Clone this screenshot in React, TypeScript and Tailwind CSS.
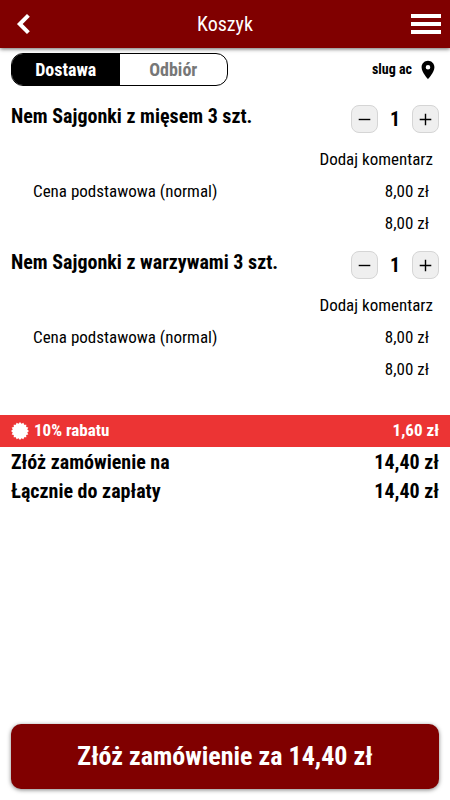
import { MdLocationOn } from "react-icons/md"

const items = [
  { id: 1, name: "Nem Sajgonki z mięsem 3 szt.", quantity: 1, price: "8,00 zł" },
  { id: 2, name: "Nem Sajgonki z warzywami 3 szt.", quantity: 1, price: "8,00 zł" },
]

const summary = [
  { label: "Złóż zamówienie na", value: "14,40 zł" },
  { label: "Łącznie do zapłaty", value: "14,40 zł" },
]

function Header() {
  return (
    <header className="grid h-12 shrink-0 grid-cols-3 items-center bg-[#800000] text-white shadow-[0_1px_4px_rgba(0,0,0,0.6)]">
      <button type="button" aria-label="Wstecz" className="ml-4 cursor-pointer justify-self-start">
        <svg viewBox="0 0 14 20" className="h-5 w-[14px]" fill="none" stroke="currentColor" strokeWidth="4">
          <path d="M12.4 1.4 3.8 10l8.6 8.6" />
        </svg>
      </button>
      <h1 className="text-center text-[20px]">Koszyk</h1>
      <button type="button" aria-label="Menu" className="mr-[9px] cursor-pointer justify-self-end">
        <svg viewBox="0 0 30 20" className="h-5 w-[30px]" fill="currentColor">
          <path d="M0 0h30v4H0zM0 8h30v4H0zM0 16h30v4H0z" />
        </svg>
      </button>
    </header>
  )
}

function StepButton({ label, path }: { label: string; path: string }) {
  return (
    <button
      type="button"
      aria-label={label}
      className="flex h-7 w-[27px] cursor-pointer items-center justify-center rounded-lg border border-[#d5d5d5] bg-[#efefef]"
    >
      <svg viewBox="0 0 13 13" className="size-[13px]" fill="none" stroke="currentColor" strokeWidth="1.4">
        <path d={path} />
      </svg>
    </button>
  )
}

function CartItem({ name, quantity, price }: { name: string; quantity: number; price: string }) {
  return (
    <li className="h-[146px]">
      <div className="flex items-start justify-between">
        <h2 className="text-[20px] leading-[22px] font-bold">{name}</h2>
        <div className="flex h-7 items-center">
          <StepButton label="Mniej" path="M.7 6.5h11.6" />
          <span className="w-[34px] text-center text-[20px] font-bold">{quantity}</span>
          <StepButton label="Więcej" path="M.7 6.5h11.6M6.5.7v11.6" />
        </div>
      </div>
      <div className="mt-[10px] flex flex-col text-[17px] leading-8">
        <button type="button" className="mr-[6px] cursor-pointer self-end">
          Dodaj komentarz
        </button>
        <p className="mr-[10px] ml-[22px] flex justify-between">
          <span>Cena podstawowa (normal)</span>
          <span>{price}</span>
        </p>
        <p className="mr-[10px] text-right">{price}</p>
      </div>
    </li>
  )
}

function DiscountIcon() {
  const points = Array.from({ length: 32 }, (_, i) => {
    const angle = (i * Math.PI) / 16
    const radius = i % 2 ? 7.4 : 9
    return `${9 + radius * Math.sin(angle)},${9 - radius * Math.cos(angle)}`
  }).join(" ")

  return (
    <svg viewBox="0 0 18 18" className="size-[18px]" fill="currentColor" aria-hidden="true">
      <polygon points={points} />
    </svg>
  )
}

export default function App() {
  return (
    <div className="flex min-h-screen flex-col bg-white font-['Roboto_Condensed',Roboto,sans-serif] text-black">
      <Header />
      <main className="flex grow flex-col">
        <div className="flex items-center justify-between px-[11px] pt-[5px]">
          <div className="flex h-[33px] w-[217px] overflow-hidden rounded-xl border border-black text-[18px] font-bold">
            <button type="button" aria-pressed="true" className="flex-1 cursor-pointer bg-black text-white">
              Dostawa
            </button>
            <button type="button" aria-pressed="false" className="flex-1 cursor-pointer text-[#777]">
              Odbiór
            </button>
          </div>
          <button type="button" className="flex cursor-pointer items-center gap-[5px] text-[14px] font-bold">
            slug ac
            <MdLocationOn className="size-[22px]" />
          </button>
        </div>
        <ul className="px-[11px] pt-[19px]">
          {items.map((item) => (
            <CartItem key={item.id} name={item.name} quantity={item.quantity} price={item.price} />
          ))}
        </ul>
        <div className="mt-[18px] flex h-8 items-center justify-between bg-[#ec3434] px-[11px] text-[17px] font-bold text-white">
          <p className="flex items-center gap-[5px]">
            <DiscountIcon />
            10% rabatu
          </p>
          <p>1,60 zł</p>
        </div>
        <dl className="px-[11px] pt-px text-[20px] leading-[29px] font-bold">
          {summary.map(({ label, value }) => (
            <div key={label} className="flex justify-between">
              <dt>{label}</dt>
              <dd>{value}</dd>
            </div>
          ))}
        </dl>
        <button
          type="button"
          className="mx-[11px] mt-auto mb-[11px] h-[65px] cursor-pointer rounded-[10px] bg-[#800000] text-[26px] font-bold text-white shadow-[0_1px_4px_rgba(0,0,0,0.5)]"
        >
          Złóż zamówienie za 14,40 zł
        </button>
      </main>
    </div>
  )
}
